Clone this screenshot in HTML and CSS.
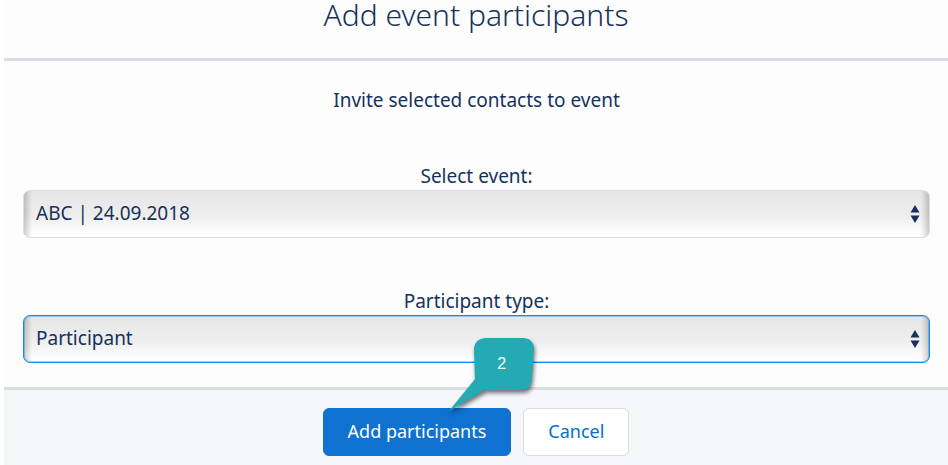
FILE: index.html
```html
<!DOCTYPE html>
<html lang="en">
<head>
<meta charset="utf-8">
<title>Add event participants</title>
<link rel="stylesheet" href="styles.css">
</head>
<body>
<form class="modal">
  <header class="modal-header">
    <h1 class="title">Add event participants</h1>
  </header>
  <main class="modal-body">
    <p class="intro">Invite selected contacts to event</p>
    <div class="field">
      <label class="label" for="event">Select event:</label>
      <div class="select-wrap">
        <select class="select" id="event"><option>ABC | 24.09.2018</option></select>
        <svg class="arrows" viewBox="0 0 10 18" aria-hidden="true"><path d="M5 0l4.500 7.500h-9zM5 18l4.500-7.500h-9z"/></svg>
      </div>
    </div>
    <div class="field">
      <label class="label" for="type">Participant type:</label>
      <div class="select-wrap">
        <select class="select select-active" id="type"><option>Participant</option></select>
        <svg class="arrows" viewBox="0 0 10 18" aria-hidden="true"><path d="M5 0l4.500 7.500h-9zM5 18l4.500-7.500h-9z"/></svg>
      </div>
    </div>
  </main>
  <footer class="modal-footer">
    <div class="primary-wrap">
      <button class="button button-primary" type="button">Add participants</button>
      <div class="callout">
        <svg class="callout-shape" viewBox="0 0 86 74" aria-hidden="true"><path d="M36 0H75Q85 1 85 11L83 42Q82 52 72 52H36L0 73L26 41L25 10Q26 1 36 0Z"/></svg>
        <span class="callout-number">2</span>
      </div>
    </div>
    <button class="button" type="button">Cancel</button>
  </footer>
</form>
</body>
</html>
```

FILE: styles.css
```css
* {
  box-sizing: border-box;
}

body {
  margin: 0;
  background: #fff;
  color: #16325c;
  font: 19px/24px "Noto Sans", "Open Sans", sans-serif;
}

.modal {
  display: flex;
  flex-direction: column;
  min-height: 100vh;
  margin-left: 4px;
  background: #fdfdfd;
}

.modal-header {
  padding-bottom: 28px;
  border-bottom: 3px solid #d8dde6;
  text-align: center;
}

.title {
  margin: 0;
  font-size: 30px;
  font-weight: 300;
  line-height: 30px;
}

.modal-body {
  display: flex;
  flex-direction: column;
  padding: 27px 18px 24px 19px;
  text-align: center;
}

.intro {
  margin: 0;
}

.field {
  display: flex;
  flex-direction: column;
  margin-top: 52px;
}

.field + .field {
  margin-top: 51px;
}

.select-wrap {
  position: relative;
  margin-top: 2px;
}

.select {
  display: block;
  width: 100%;
  height: 48px;
  padding: 0 32px 2px 12px;
  appearance: none;
  border: 1px solid #d8dde6;
  border-radius: 7px;
  outline: 0;
  background:
    linear-gradient(to right, #00000030, #0000 8px),
    linear-gradient(to left, #00000030, #0000 8px),
    linear-gradient(#e6e6e6, #eee 55%, #fff 95%);
  color: inherit;
  font: inherit;
}

.select-active {
  border-color: #1589ee;
  box-shadow: inset 0 0 0 1px #1589ee60;
}

.arrows {
  position: absolute;
  top: 15px;
  right: 10px;
  width: 10px;
  height: 18px;
  fill: #16325c;
  pointer-events: none;
}

.modal-footer {
  display: flex;
  flex: 1;
  align-items: flex-start;
  justify-content: center;
  gap: 12px;
  padding-top: 18px;
  border-top: 3px solid #d8dde6;
  background: #f4f6fa;
}

.primary-wrap {
  position: relative;
}

.button {
  height: 48px;
  padding: 0 24px 2px;
  border: 1px solid #d8dde6;
  border-radius: 6px;
  background: #fff;
  color: #0070d2;
  font: inherit;
  font-size: 18px;
}

.button-primary {
  border-color: #0f71d0;
  background: #0f71d0;
  color: #fff;
}

.callout {
  position: absolute;
  top: -70px;
  left: 126px;
  width: 86px;
  height: 74px;
  pointer-events: none;
}

.callout-shape {
  display: block;
  width: 100%;
  height: 100%;
  overflow: visible;
  fill: #23aab3;
  filter: drop-shadow(1px 3px 2px #0008);
}

.callout-number {
  position: absolute;
  top: 0;
  right: 4px;
  width: 58px;
  color: #fff;
  font: 16px/52px "Liberation Sans", sans-serif;
  text-align: center;
}
```
